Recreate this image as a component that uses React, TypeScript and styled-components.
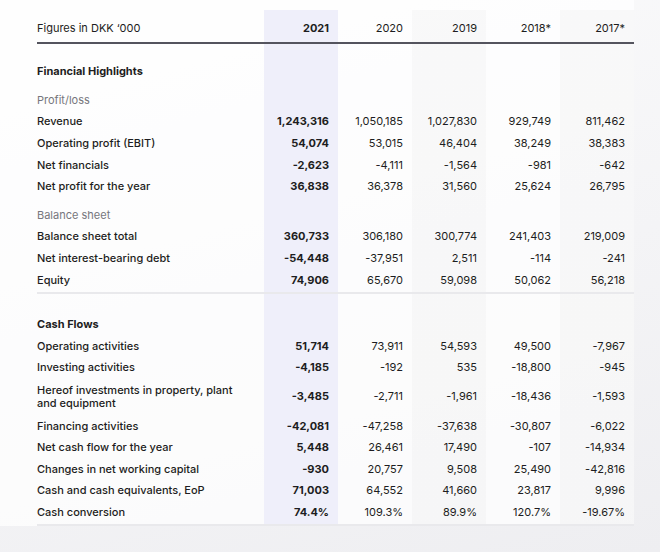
import React from 'react';
import styled, { createGlobalStyle } from 'styled-components';

const Global = createGlobalStyle`
  html, body { margin: 0; padding: 0; }
  body {
    font-family: Inter, "Liberation Sans", Arial, sans-serif;
    color: #1d1d21;
    background: #f2f2f4;
  }
`;

const Page = styled.div`
  width: 660px;
  height: 552px;
  overflow: hidden;
  background: linear-gradient(165deg, #fbfbfc 0%, #f4f4f6 55%, #eeeef1 100%);
`;

const Panel = styled.div`
  width: 634px;
  box-sizing: border-box;
  padding: 10px 0 0 37px;
  background: rgba(255, 255, 255, 0.72);
`;

const shade = 'rgba(0,0,0,0.018)';

const Table = styled.div`
  display: flex;
  flex-direction: column;
  font-size: 11px;
  background: linear-gradient(
    to right,
    transparent 227px,
    #efeffa 227px,
    #efeffa 301px,
    transparent 301px,
    transparent 375px,
    ${shade} 375px,
    ${shade} 449px,
    transparent 449px,
    transparent 523px,
    ${shade} 523px
  );
`;

const Row = styled.div<{ $gap?: number; $tall?: boolean }>`
  display: grid;
  grid-template-columns: 227px repeat(5, 74px);
  align-items: center;
  box-sizing: border-box;
  height: ${(p) => (p.$tall ? 36.5 : 21.6)}px;
  line-height: 13px;
  margin-top: ${(p) => p.$gap ?? 0}px;
  flex: none;
`;

const HeaderRow = styled(Row)`
  height: 34px;
  padding-top: 5px;
  border-bottom: 2px solid #54545e;
`;

const Label = styled.div<{ $kind?: 'title' | 'group' | 'head' | 'item' }>`
  font-weight: ${(p) => (p.$kind === 'title' ? 700 : p.$kind === 'item' ? 500 : 400)};
  color: ${(p) => (p.$kind === 'group' ? '#76767c' : '#1d1d21')};
`;

const WrapLabel = styled(Label)`
  line-height: 13.4px;
  padding-right: 28px;
`;

const Cell = styled.div<{ $strong?: boolean }>`
  text-align: right;
  padding-right: 9px;
  font-weight: ${(p) => (p.$strong ? 700 : 400)};
  white-space: nowrap;
`;

const Divider = styled.div`
  margin-top: 1px;
  border-top: 2px solid #e9e9ec;
`;

type Line = { label: string; values: string[]; wrap?: boolean };

const years = ['2021', '2020', '2019', '2018*', '2017*'];

const profitLoss: Line[] = [
  { label: 'Revenue', values: ['1,243,316', '1,050,185', '1,027,830', '929,749', '811,462'] },
  { label: 'Operating profit (EBIT)', values: ['54,074', '53,015', '46,404', '38,249', '38,383'] },
  { label: 'Net financials', values: ['-2,623', '-4,111', '-1,564', '-981', '-642'] },
  { label: 'Net profit for the year', values: ['36,838', '36,378', '31,560', '25,624', '26,795'] },
];

const balance: Line[] = [
  { label: 'Balance sheet total', values: ['360,733', '306,180', '300,774', '241,403', '219,009'] },
  { label: 'Net interest-bearing debt', values: ['-54,448', '-37,951', '2,511', '-114', '-241'] },
  { label: 'Equity', values: ['74,906', '65,670', '59,098', '50,062', '56,218'] },
];

const cashFlows: Line[] = [
  { label: 'Operating activities', values: ['51,714', '73,911', '54,593', '49,500', '-7,967'] },
  { label: 'Investing activities', values: ['-4,185', '-192', '535', '-18,800', '-945'] },
  {
    label: 'Hereof investments in property, plant and equipment',
    values: ['-3,485', '-2,711', '-1,961', '-18,436', '-1,593'],
    wrap: true,
  },
  { label: 'Financing activities', values: ['-42,081', '-47,258', '-37,638', '-30,807', '-6,022'] },
  { label: 'Net cash flow for the year', values: ['5,448', '26,461', '17,490', '-107', '-14,934'] },
  { label: 'Changes in net working capital', values: ['-930', '20,757', '9,508', '25,490', '-42,816'] },
  { label: 'Cash and cash equivalents, EoP', values: ['71,003', '64,552', '41,660', '23,817', '9,996'] },
  { label: 'Cash conversion', values: ['74.4%', '109.3%', '89.9%', '120.7%', '-19.67%'] },
];

const DataRows = ({ lines }: { lines: Line[] }) => (
  <>
    {lines.map((l) => (
      <Row key={l.label} $tall={l.wrap}>
        {l.wrap ? <WrapLabel $kind="item">{l.label}</WrapLabel> : <Label $kind="item">{l.label}</Label>}
        {l.values.map((v, i) => (
          <Cell key={i} $strong={i === 0}>
            {v}
          </Cell>
        ))}
      </Row>
    ))}
  </>
);

export default function App() {
  return (
    <Page>
      <Global />
      <Panel>
        <Table>
          <HeaderRow>
            <Label $kind="head">Figures in DKK ‘000</Label>
            {years.map((y, i) => (
              <Cell key={y} $strong={i === 0}>
                {y}
              </Cell>
            ))}
          </HeaderRow>

          <Row $gap={17}>
            <Label $kind="title">Financial Highlights</Label>
          </Row>
          <Row $gap={7}>
            <Label $kind="group">Profit/loss</Label>
          </Row>
          <DataRows lines={profitLoss} />
          <Row $gap={7}>
            <Label $kind="group">Balance sheet</Label>
          </Row>
          <DataRows lines={balance} />
          <Divider />

          <Row $gap={20}>
            <Label $kind="title">Cash Flows</Label>
          </Row>
          <DataRows lines={cashFlows} />
          <Divider />
        </Table>
      </Panel>
    </Page>
  );
}
